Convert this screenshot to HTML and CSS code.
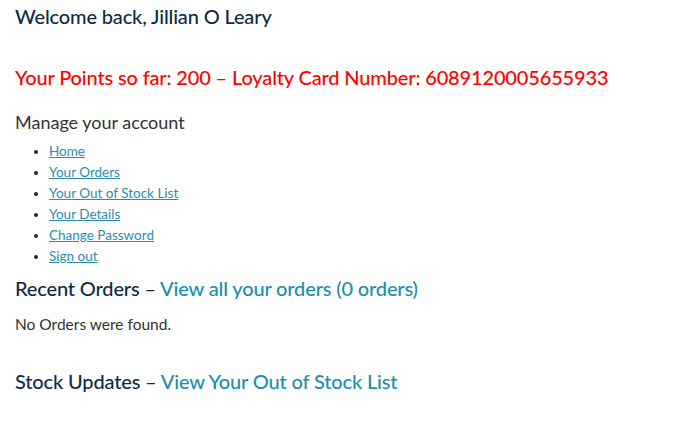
FILE: index.html
```html
<!DOCTYPE html>
<html lang="en">
<head>
    <meta charset="UTF-8">
    <title>My Account</title>
    <link rel="stylesheet" href="styles.css">
</head>
<body>
    <div class="account">
        <h2 class="welcome">Welcome back, Jillian O Leary</h2>
        <h2 class="points">Your Points so far: 200 – Loyalty Card Number: 6089120005655933</h2>

        <p class="manage">Manage your account</p>
        <ul class="account-menu">
            <li><a href="#">Home</a></li>
            <li><a href="#">Your Orders</a></li>
            <li><a href="#">Your Out of Stock List</a></li>
            <li><a href="#">Your Details</a></li>
            <li><a href="#">Change Password</a></li>
            <li><a href="#">Sign out</a></li>
        </ul>

        <h2 class="section-title">Recent Orders – <a href="#">View all your orders (0 orders)</a></h2>
        <p class="empty">No Orders were found.</p>

        <h2 class="section-title stock">Stock Updates – <a href="#">View Your Out of Stock List</a></h2>
    </div>
</body>
</html>
```

FILE: styles.css
```css
body {
    margin: 0;
    font-family: 'Lato', sans-serif;
    color: #333;
    background: #fff;
}
.account {
    padding: 3px 15px;
}
h2 {
    font-weight: 500;
    font-size: 20px;
    line-height: 26px;
    letter-spacing: -0.15px;
    margin: 0;
    color: #0d2c45;
}
.points {
    color: #ff0000;
    margin-top: 35px;
}
.manage {
    font-size: 18px;
    margin: 21px 0 8px;
    color: #333;
}
.account-menu {
    margin: 0;
    padding-left: 34px;
    font-size: 13.5px;
    line-height: 21px;
}
.account-menu li::marker {
    color: #0d2c45;
}
.account-menu a {
    color: #2a8db0;
}
.section-title {
    margin-top: 8px;
}
.section-title a {
    color: #1a8fae;
    text-decoration: none;
}
.empty {
    font-size: 15.5px;
    margin: 14px 0 0;
}
.stock {
    margin-top: 35px;
}
```
